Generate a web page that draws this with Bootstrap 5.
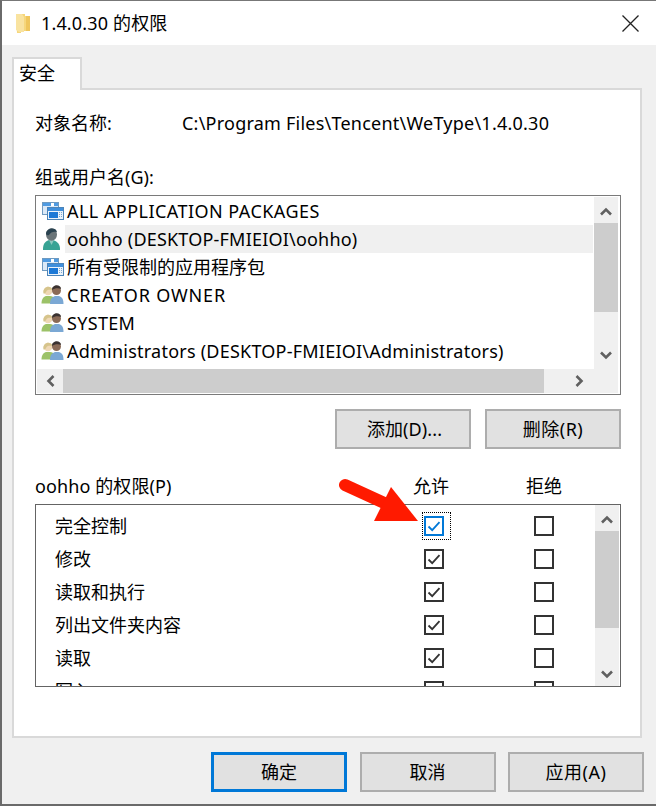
<!DOCTYPE html>
<html lang="zh">
<head>
<meta charset="utf-8">
<title>1.4.0.30 的权限</title>
<link href="https://cdn.jsdelivr.net/npm/bootstrap@5.3.0/dist/css/bootstrap.min.css" rel="stylesheet">
<style>
html,body{margin:0;background:#f0f0f0;}
body{font-family:"Noto Sans","Noto Sans CJK SC",sans-serif;font-size:18px;line-height:24px;color:#000;width:656px;height:806px;overflow:hidden;}
.win{position:relative;width:656px;height:806px;background:#f0f0f0;border-left:2px solid #6a6a6a;border-top:1px solid #777;border-bottom:2px solid #6a6a6a;}
.titlebar{height:44px;background:#fff;padding-left:14px;gap:11px;}
.wintitle{letter-spacing:.15px;}
.title-close{margin-left:auto;margin-right:17px;}
.tabbar{height:43px;padding:12px 0 0 10px;}
.tabhead{width:70px;height:33px;background:#fff;border:2px solid #d9d9d9;border-bottom:0;padding:2px 0 0 5px;position:relative;z-index:1;}
.pane{width:630px;height:650px;margin-left:10px;background:#fff;border:2px solid #d9d9d9;padding:20px 20px 0 21px;}
.objrow{height:24px;margin-top:1px;}
.objlabel{width:147px;}
.objpath{letter-spacing:.23px;}
.grplabel{margin-top:30px;height:24px;}
.lbox{width:586px;border:1px solid #7a7a7a;background:#fff;margin-top:6px;display:grid;}
.lbox-a{height:200px;grid-template-columns:1fr 24px;grid-template-rows:1fr 24px;padding:1px 2px 1px 1px;}
.lbox-b{height:183px;grid-template-columns:1fr 24px;padding:0 1px 0 0;border-color:#646464;}
.rows{overflow:hidden;padding:0;}
.urow{height:28px;padding-left:2px;white-space:nowrap;}
.utext{flex:1;height:28px;line-height:28px;margin-left:1px;padding-left:2px;}
.urow-sel .utext{background:#f0f0f0;}
.rows-a{margin-right:1px;}
.uicon{width:25px;height:28px;flex:none;}
.ls-all{letter-spacing:.46px;}
.ls-me{letter-spacing:.2px;}
.ls-creator{letter-spacing:.85px;}
.ls-system{letter-spacing:.33px;}
.ls-admin{letter-spacing:.23px;}
.vbar,.hbar{background:#f0f0f0;}
.vbar{display:flex;flex-direction:column;}
.vbar-a{grid-row:1 / span 2;grid-column:2;}
.sbtn{flex:none;display:flex;align-items:center;justify-content:center;}
.vbar .sbtn{height:24px;}
.vbar .sbtn-up{padding-top:5px;}
.vbar .sbtn-dn{padding-bottom:3px;}
.vthumb{background:#cdcdcd;}
.vthumb-a{height:89px;margin-top:2px;}
.vthumb-b{height:97px;margin-top:2px;}
.vgap{flex:1;}
.hbar{display:flex;grid-column:1;grid-row:2;height:24px;}
.hbar .sbtn{width:26px;}
.hbar .sbtn-rt{padding-right:3px;}
.hthumb{width:481px;background:#cdcdcd;}
.hgap{flex:1;}
.actions{margin-top:14px;width:586px;gap:14px;}
.btn.wbtn{width:136px;height:40px;background:#e1e1e1;border:2px solid #adadad;border-radius:0;color:#000;font-size:18px;line-height:24px;padding:0;}
.btn.wbtn-def{border:3px solid #0078d7;}
.btn.wbtn-lat{letter-spacing:.5px;}
.btn.wbtn-add{letter-spacing:.1px;padding-left:3px;}
.permhead{margin-top:25px;height:24px;width:586px;}
.permname{width:378px;letter-spacing:.1px;}
.permcol{width:36px;}
.permcol2{margin-left:77px;}
.lbox-b{margin-top:6px;}
.prow{height:33px;padding:0 0 1px 19px;white-space:nowrap;}
.plabel{width:369px;flex:none;}
.pcell{position:relative;width:20px;height:20px;flex:none;}
.pcell2{margin-left:90px;}
.cbx{display:block;width:20px;height:20px;}
.focusbox{position:absolute;left:-2px;top:-4px;width:29px;height:28px;border:1px dotted #000;}
.rows-b{padding-top:5px;}
.footbar{margin-top:14px;padding-left:209px;gap:12.5px;}
.redarrow{position:absolute;left:330px;top:470px;pointer-events:none;}
</style>
</head>
<body>
<svg width="0" height="0" class="position-absolute">
<defs>
<symbol id="i-app" viewBox="0 0 25 28">
<rect x="3.500" y="5.500" width="16" height="12" fill="#dbe9f7" stroke="#6f9ac0"/>
<rect x="4" y="6" width="15" height="3" fill="#4f9be2"/>
<rect x="12" y="6" width="3" height="3" fill="#fff"/>
<rect x="8.500" y="10.500" width="16" height="12" fill="#eaf2fa" stroke="#4c84b8"/>
<rect x="9" y="11" width="15" height="3" fill="#3f8fdc"/>
<rect x="10" y="15" width="9" height="6" fill="#1b78d6"/>
<path d="M20 15.500h3M20 17.500h3M20 19.500h3" stroke="#7aa6cf" stroke-width="1" stroke-dasharray="1 1"/>
</symbol>
<symbol id="i-user" viewBox="0 0 25 28">
<path d="M4 24c0-6 3-8 6-9h4c3 1 7 3 7 9v1H4z" fill="#37a394"/>
<path d="M10 15l2.500 5 2.500-5z" fill="#8cc8be"/>
<ellipse cx="12.500" cy="9.500" rx="5.500" ry="6.200" fill="#6a7478"/>
<path d="M7 9c0-6 10-7.500 11-2-3-1-6.500 0-8 3-1 .5-2 .5-3-1z" fill="#2a4250"/>
</symbol>
<symbol id="i-group" viewBox="0 0 25 28">
<path d="M2.500 22.500c0-5 2.500-7.500 5.500-7.500h3c2 0 4 1 4 3v4.500z" fill="#9cc268"/>
<circle cx="9" cy="10" r="4.300" fill="#efd8b6"/>
<path d="M4.500 12.500c-1.500-7.500 8-9 9-3.500-2-.5-5-.5-6 1-.5 2-2 2.500-3 2.500z" fill="#d6c48c"/>
<path d="M11 23c0-5 2-7 5-8h4c3 1 4.500 3 4.500 8z" fill="#7ba8d4"/>
<circle cx="17.500" cy="9.500" r="4.500" fill="#8a6a56"/>
<path d="M13 9c0-6 9-6 9-1-2-1-6.500-1-9 1z" fill="#3a3230"/>
</symbol>
<symbol id="c-off" viewBox="0 0 20 20"><rect x="1" y="1" width="18" height="18" fill="#fff" stroke="#333" stroke-width="2"/></symbol>
<symbol id="c-on" viewBox="0 0 20 20"><rect x="1" y="1" width="18" height="18" fill="#fff" stroke="#333" stroke-width="2"/><path d="M4.500 10.500l3.700 3.700 7.300-8" fill="none" stroke="#333" stroke-width="1.800"/></symbol>
<symbol id="c-focus" viewBox="0 0 20 20"><rect x="1" y="1" width="18" height="18" fill="#fff" stroke="#0078d7" stroke-width="2"/><path d="M4.500 10.500l3.700 3.700 7.300-8" fill="none" stroke="#0078d7" stroke-width="1.800"/></symbol>
<symbol id="a-up" viewBox="0 0 12 9"><path d="M1 7.500l5-5 5 5" fill="none" stroke="#606060" stroke-width="2.600"/></symbol>
<symbol id="a-down" viewBox="0 0 12 9"><path d="M1 1.500l5 5 5-5" fill="none" stroke="#606060" stroke-width="2.600"/></symbol>
<symbol id="a-left" viewBox="0 0 9 12"><path d="M7.500 1l-5 5 5 5" fill="none" stroke="#606060" stroke-width="2.600"/></symbol>
<symbol id="a-right" viewBox="0 0 9 12"><path d="M1.500 1l5 5-5 5" fill="none" stroke="#606060" stroke-width="2.600"/></symbol>
</defs>
</svg>

<div class="win">
  <div class="titlebar d-flex align-items-center">
    <svg width="14" height="20" viewBox="0 0 14 20"><path d="M0 1h9v2h5v15H5v2H1z" fill="#f6d77c"/><path d="M0 1h6l2 3v15H3l-3-2z" fill="#f9e3a0"/><path d="M10 3h4v15h-4z" fill="#efc65c"/></svg>
    <span class="wintitle">1.4.0.30 的权限</span>
    <svg class="title-close" width="17" height="17" viewBox="0 0 17 17"><path d="M.5.500l16 16M16.500.500l-16 16" stroke="#222" stroke-width="1.300"/></svg>
  </div>
  <div class="tabbar"><div class="tabhead">安全</div></div>
  <div class="pane">
    <div class="objrow d-flex"><div class="objlabel">对象名称:</div><div class="objpath">C:\Program Files\Tencent\WeType\1.4.0.30</div></div>
    <div class="grplabel">组或用户名(G):</div>
    <div class="lbox lbox-a">
      <div class="rows rows-a">
        <div class="urow d-flex align-items-center"><svg class="uicon"><use href="#i-app"/></svg><span class="utext ls-all">ALL APPLICATION PACKAGES</span></div>
        <div class="urow urow-sel d-flex align-items-center"><svg class="uicon"><use href="#i-user"/></svg><span class="utext ls-me">oohho (DESKTOP-FMIEIOI\oohho)</span></div>
        <div class="urow d-flex align-items-center"><svg class="uicon"><use href="#i-app"/></svg><span class="utext">所有受限制的应用程序包</span></div>
        <div class="urow d-flex align-items-center"><svg class="uicon"><use href="#i-group"/></svg><span class="utext ls-creator">CREATOR OWNER</span></div>
        <div class="urow d-flex align-items-center"><svg class="uicon"><use href="#i-group"/></svg><span class="utext ls-system">SYSTEM</span></div>
        <div class="urow d-flex align-items-center"><svg class="uicon"><use href="#i-group"/></svg><span class="utext ls-admin">Administrators (DESKTOP-FMIEIOI\Administrators)</span></div>
      </div>
      <div class="vbar vbar-a">
        <div class="sbtn sbtn-up"><svg width="12" height="9"><use href="#a-up"/></svg></div>
        <div class="vthumb vthumb-a"></div>
        <div class="vgap"></div>
        <div class="sbtn sbtn-dn"><svg width="12" height="9"><use href="#a-down"/></svg></div>
        <div class="sbtn"></div>
      </div>
      <div class="hbar">
        <div class="sbtn"><svg width="9" height="12"><use href="#a-left"/></svg></div>
        <div class="hthumb"></div>
        <div class="hgap"></div>
        <div class="sbtn sbtn-rt"><svg width="9" height="12"><use href="#a-right"/></svg></div>
      </div>
    </div>
    <div class="actions d-flex justify-content-end">
      <button type="button" class="btn wbtn wbtn-add">添加(D)...</button>
      <button type="button" class="btn wbtn wbtn-lat">删除(R)</button>
    </div>
    <div class="permhead d-flex">
      <div class="permname">oohho 的权限(P)</div>
      <div class="permcol">允许</div>
      <div class="permcol permcol2">拒绝</div>
    </div>
    <div class="lbox lbox-b">
      <div class="rows rows-b">
        <div class="prow d-flex align-items-center"><div class="plabel">完全控制</div><div class="pcell"><svg class="cbx"><use href="#c-focus"/></svg><div class="focusbox"></div></div><div class="pcell pcell2"><svg class="cbx"><use href="#c-off"/></svg></div></div>
        <div class="prow d-flex align-items-center"><div class="plabel">修改</div><div class="pcell"><svg class="cbx"><use href="#c-on"/></svg></div><div class="pcell pcell2"><svg class="cbx"><use href="#c-off"/></svg></div></div>
        <div class="prow d-flex align-items-center"><div class="plabel">读取和执行</div><div class="pcell"><svg class="cbx"><use href="#c-on"/></svg></div><div class="pcell pcell2"><svg class="cbx"><use href="#c-off"/></svg></div></div>
        <div class="prow d-flex align-items-center"><div class="plabel">列出文件夹内容</div><div class="pcell"><svg class="cbx"><use href="#c-on"/></svg></div><div class="pcell pcell2"><svg class="cbx"><use href="#c-off"/></svg></div></div>
        <div class="prow d-flex align-items-center"><div class="plabel">读取</div><div class="pcell"><svg class="cbx"><use href="#c-on"/></svg></div><div class="pcell pcell2"><svg class="cbx"><use href="#c-off"/></svg></div></div>
        <div class="prow d-flex align-items-center"><div class="plabel">写入</div><div class="pcell"><svg class="cbx"><use href="#c-off"/></svg></div><div class="pcell pcell2"><svg class="cbx"><use href="#c-off"/></svg></div></div>
      </div>
      <div class="vbar">
        <div class="sbtn sbtn-up"><svg width="12" height="9"><use href="#a-up"/></svg></div>
        <div class="vthumb vthumb-b"></div>
        <div class="vgap"></div>
        <div class="sbtn"><svg width="12" height="9"><use href="#a-down"/></svg></div>
      </div>
    </div>
  </div>
  <div class="footbar d-flex">
    <button type="button" class="btn wbtn wbtn-def">确定</button>
    <button type="button" class="btn wbtn">取消</button>
    <button type="button" class="btn wbtn wbtn-lat">应用(A)</button>
  </div>
</div>
<svg class="redarrow" width="100" height="60" viewBox="330 470 100 60"><path d="M345 485L393 507" stroke="#ff1a00" stroke-width="12" stroke-linecap="round"/><path d="M391 487L418 521L374 521z" fill="#ff1a00"/></svg>
<script src="https://cdn.jsdelivr.net/npm/bootstrap@5.3.0/dist/js/bootstrap.bundle.min.js"></script>
</body>
</html>
